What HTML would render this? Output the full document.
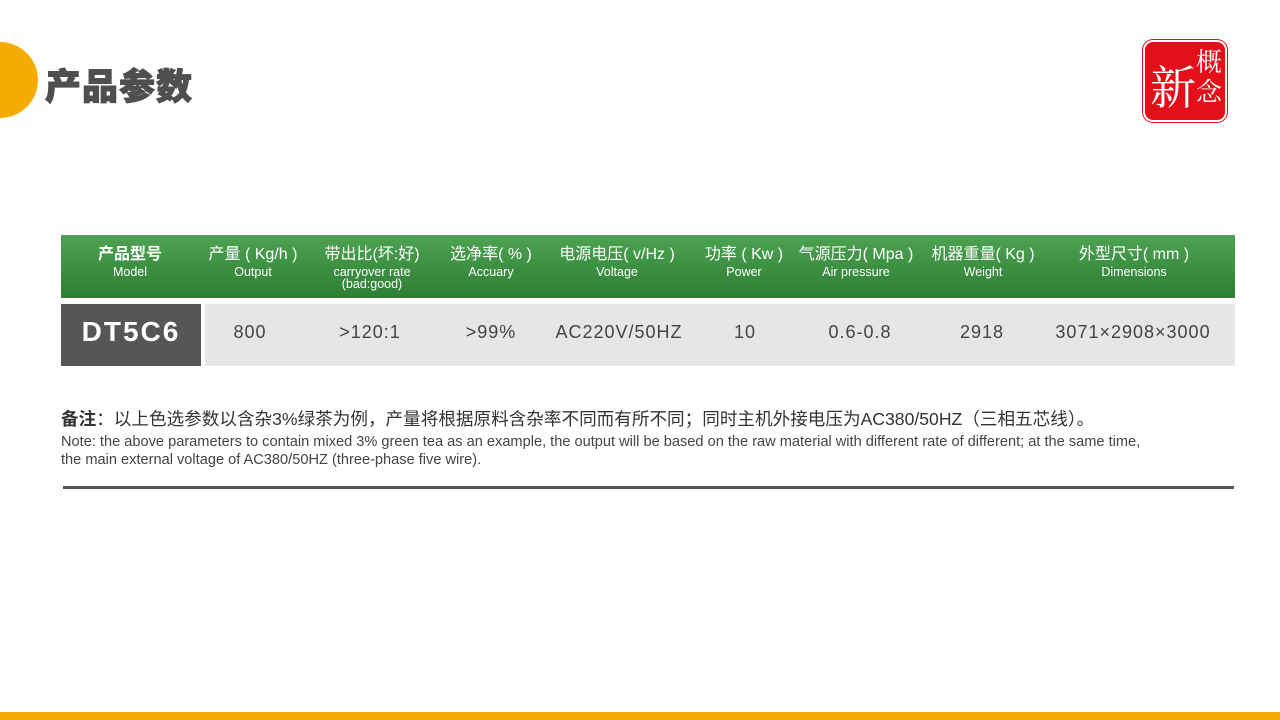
<!DOCTYPE html>
<html><head><meta charset="utf-8"><style>
body{margin:0;width:1280px;height:720px;position:relative;background:#fff;overflow:hidden;font-family:"Liberation Sans","Noto Sans CJK SC",sans-serif;}
.a{position:absolute;}
.hd{left:61px;top:235px;width:1174px;height:63px;background:linear-gradient(#4da352,#2d7e33);}
.c{position:absolute;transform:translateX(-50%);text-align:center;color:#fff;white-space:nowrap;}
.c b{display:block;font-weight:normal;font-size:16px;line-height:20px;margin-top:10px;}
.c i{display:block;font-style:normal;font-size:12.5px;line-height:13px;margin-top:1px;}
.d{position:absolute;transform:translateX(-50%);top:322px;font-size:18px;color:#444;letter-spacing:1px;white-space:nowrap;}
</style></head><body>
<div class="a" style="left:-38px;top:42px;width:76px;height:76px;border-radius:50%;background:#f5ab00"></div>
<div class="a" style="left:45px;top:58px;font-size:36px;font-weight:900;color:#4f4f4f;letter-spacing:1px;-webkit-text-stroke:1px #4f4f4f">产品参数</div>
<div class="a" style="left:1145px;top:42px;width:80px;height:78px;background:#e3101a;border-radius:8px;box-shadow:0 0 0 2px #fff,0 0 0 3px #e3101a"></div>
<div class="a" style="left:1150px;top:52px;font-size:46px;color:#fff;font-family:'Noto Serif CJK SC',serif">新</div>
<div class="a" style="left:1196px;top:46px;font-size:26px;line-height:30px;color:#fff;font-family:'Noto Serif CJK SC',serif">概<br>念</div>
<div class="a hd"></div>
<div class="c" style="left:130px;top:235px"><b style="font-weight:bold">产品型号</b><i>Model</i></div>
<div class="c" style="left:253px;top:235px"><b>产量 ( Kg/h )</b><i>Output</i></div>
<div class="c" style="left:372px;top:235px"><b>带出比(坏:好)</b><i style="line-height:12px">carryover rate<br>(bad:good)</i></div>
<div class="c" style="left:491px;top:235px"><b>选净率( % )</b><i>Accuary</i></div>
<div class="c" style="left:617px;top:235px"><b>电源电压( v/Hz )</b><i>Voltage</i></div>
<div class="c" style="left:744px;top:235px"><b>功率 ( Kw )</b><i>Power</i></div>
<div class="c" style="left:856px;top:235px"><b>气源压力( Mpa )</b><i>Air pressure</i></div>
<div class="c" style="left:983px;top:235px"><b>机器重量( Kg )</b><i>Weight</i></div>
<div class="c" style="left:1134px;top:235px"><b>外型尺寸( mm )</b><i>Dimensions</i></div>
<div class="a" style="left:61px;top:304px;width:140px;height:62px;background:#555658"></div>
<div class="a" style="left:205px;top:304px;width:1030px;height:62px;background:#e6e6e6"></div>
<div class="d" style="left:131px;top:316px;font-size:28px;font-weight:bold;color:#fff;letter-spacing:2px">DT5C6</div>
<div class="d" style="left:250px">800</div>
<div class="d" style="left:370px">&gt;120:1</div>
<div class="d" style="left:491px">&gt;99%</div>
<div class="d" style="left:619px">AC220V/50HZ</div>
<div class="d" style="left:745px">10</div>
<div class="d" style="left:860px">0.6-0.8</div>
<div class="d" style="left:982px">2918</div>
<div class="d" style="left:1133px">3071×2908×3000</div>
<div class="a" style="left:61px;top:406px;font-size:17.6px;color:#333;white-space:nowrap"><b>备注</b>：以上色选参数以含杂3%绿茶为例，产量将根据原料含杂率不同而有所不同；同时主机外接电压为AC380/50HZ（三相五芯线）。</div>
<div class="a" style="left:61px;top:433px;font-size:14.6px;line-height:18px;color:#444;white-space:nowrap">Note: the above parameters to contain mixed 3% green tea as an example, the output will be based on the raw material with different rate of different; at the same time,<br>the main external voltage of AC380/50HZ (three-phase five wire).</div>
<div class="a" style="left:63px;top:486px;width:1171px;height:3px;background:#555"></div>
<div class="a" style="left:0;top:712px;width:1280px;height:8px;background:#f5ab00"></div>
</body></html>
